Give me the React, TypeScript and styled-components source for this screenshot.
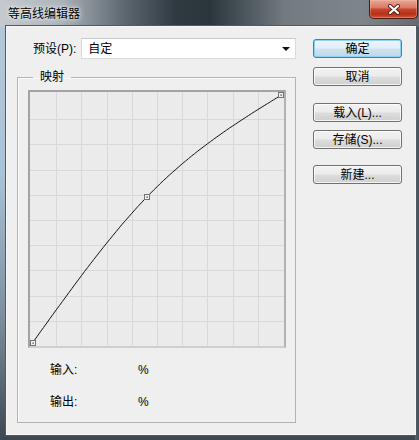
import React from "react";
import styled, { createGlobalStyle } from "styled-components";

const GlobalStyle = createGlobalStyle`
  html, body { margin: 0; padding: 0; background: #3a444c; }
  body {
    font-family: "Liberation Sans", "Noto Sans CJK SC", sans-serif;
    font-size: 12px;
    color: #000;
  }
`;

const UI_FONT = `"Liberation Sans", "Noto Sans CJK SC", sans-serif`;

/* window chrome */
const Window = styled.div`
  width: 419px;
  height: 440px;
  display: flex;
  flex-direction: column;
  overflow: hidden;
  background: linear-gradient(
    to right,
    #c4cacf 0%,
    #aeb5ba 14%,
    #5b666e 30%,
    #303a41 42%,
    #2c353c 50%,
    #4a545b 58%,
    #737a80 68%,
    #7f868b 86%,
    #646c73 100%
  );
`;

const TitleBar = styled.div`
  height: 27px;
  display: flex;
  justify-content: space-between;
  align-items: flex-start;
  padding-left: 8px;
`;

const TitleText = styled.div`
  font-family: ${UI_FONT};
  font-size: 12px;
  line-height: 16px;
  margin-top: 6px;
  text-shadow: 0 0 6px rgba(255, 255, 255, 0.9), 0 0 3px rgba(255, 255, 255, 0.8);
`;

const CloseButton = styled.div`
  width: 47px;
  height: 18px;
  margin-right: 1px;
  display: flex;
  align-items: center;
  justify-content: center;
  border: 1px solid #4e1a10;
  border-top: none;
  border-radius: 0 0 5px 5px;
  background: linear-gradient(#e9a797 0%, #dc7a66 42%, #c5452d 52%, #b52f16 78%, #d0553a 100%);
  box-shadow: inset 0 0 0 1px rgba(255, 200, 180, 0.35);
`;

const Frame = styled.div`
  flex: 1;
  display: flex;
  padding: 0 4px 6px 7px;
  background:
    linear-gradient(to left, #454f58 0, #5a646c 4px, transparent 4px),
    linear-gradient(to bottom, #b4c7d6 0%, #a9c3d8 35%, #7d8f9e 70%, #3d4750 100%);
`;

const Client = styled.div`
  flex: 1;
  display: flex;
  gap: 17px;
  padding: 11px 13px 0 10px;
  background: #efefef;
  box-shadow: 0 0 0 1px #f7f7f7, 0 0 0 2px #4d5963;
`;

/* left side */
const MainColumn = styled.div`
  width: 279px;
  display: flex;
  flex-direction: column;
`;

const PresetRow = styled.div`
  height: 21px;
  display: flex;
  align-items: center;
  padding-left: 16px;
  gap: 5px;
`;

const FieldLabel = styled.span`
  font-family: ${UI_FONT};
  font-size: 12px;
  line-height: 16px;
  white-space: nowrap;
`;

const ComboBox = styled.div`
  flex: 1;
  height: 21px;
  box-sizing: border-box;
  display: flex;
  align-items: center;
  justify-content: space-between;
  padding: 0 4px 0 6px;
  background: #fff;
  border: 1px solid #dadada;
  border-top-color: #c9c9c9;
  font-size: 12px;
  line-height: 16px;
`;

const Caret = styled.span`
  width: 0;
  height: 0;
  border-style: solid;
  border-width: 4px 4px 0 4px;
  border-color: #111 transparent transparent transparent;
  margin-right: 1px;
`;

const Group = styled.fieldset`
  margin: 10px 0 0 0;
  min-width: 0;
  padding: 5px 9px 12px 10px;
  border: 1px solid #b3b3b3;
  box-shadow: inset 1px 1px 0 #fafafa;
`;

const GroupLegend = styled.legend`
  margin-left: 5px;
  padding: 0 7px;
  font-family: ${UI_FONT};
  font-size: 12px;
  line-height: 16px;
`;

const CurveBox = styled.div`
  width: 258px;
  height: 258px;
  box-sizing: border-box;
  border: 2px solid #a3a3a3;
  border-right-color: #b2b2b2;
  border-bottom: 2px solid #cfcfcf;
  background: #ebebeb;
  svg { display: block; }
`;

const Readouts = styled.div`
  display: grid;
  grid-template-columns: 88px auto;
  row-gap: 16px;
  margin-top: 14px;
  padding-left: 22px;
  font-size: 12px;
  line-height: 16px;
`;

/* right side */
const ButtonColumn = styled.div`
  width: 89px;
  display: flex;
  flex-direction: column;
  padding-top: 1px;
`;

const DialogButton = styled.button<{ $primary?: boolean; $gap: number }>`
  height: 19px;
  width: 100%;
  margin-top: ${({ $gap }) => $gap}px;
  padding: 0;
  font-family: ${UI_FONT};
  font-size: 12px;
  line-height: 16px;
  color: #000;
  border-radius: 3px;
  border: 1px solid ${({ $primary }) => ($primary ? "#3c7fb1" : "#707070")};
  background: ${({ $primary }) =>
    $primary
      ? "linear-gradient(#edf6fb 0%, #e2eff7 48%, #cfe3ef 52%, #bdd7e7 100%)"
      : "linear-gradient(#f3f3f3 0%, #ebebeb 48%, #dddddd 52%, #cfcfcf 100%)"};
  box-shadow: inset 0 0 0 1px
    ${({ $primary }) => ($primary ? "#8fd3f2" : "rgba(255,255,255,0.75)")};
  cursor: default;
`;

/* contour: natural cubic spline through three normalised points */
const KNOTS: [number, number][] = [[0, 0], [0.46, 0.59], [1, 1]];
const toPx = (x: number, y: number): [number, number] => [1 + 252 * x, 253 - 251 * y];

function splineSamples(count: number) {
  const [[x0, y0], [x1, y1], [x2, y2]] = KNOTS;
  const h0 = x1 - x0;
  const h1 = x2 - x1;
  const m1 = (3 * ((y2 - y1) / h1 - (y1 - y0) / h0)) / (h0 + h1);
  const seg = (x: number) => {
    if (x <= x1) {
      return (m1 * (x - x0) ** 3) / (6 * h0) + (y0 / h0) * (x1 - x) + (y1 / h0 - (m1 * h0) / 6) * (x - x0);
    }
    return (m1 * (x2 - x) ** 3) / (6 * h1) + (y1 / h1 - (m1 * h1) / 6) * (x2 - x) + (y2 / h1) * (x - x1);
  };
  return Array.from({ length: count + 1 }, (_, i) => {
    const x = i / count;
    return toPx(x, seg(x));
  });
}

const CURVE = splineSamples(80);
const HANDLES = KNOTS.map(([x, y]) => toPx(x, y));
const GRID = Array.from({ length: 9 }, (_, i) => Math.round(1 + 25.2 * (i + 1)) + 0.5);
const GRID_Y = Array.from({ length: 9 }, (_, i) => Math.round(2 + 25.2 * (i + 1)) + 0.5);

function CurveChart() {
  return (
    <CurveBox>
      <svg width="254" height="254" viewBox="0 0 254 254">
        {GRID.map((x) => (
          <line key={"v" + x} x1={x} y1={0} x2={x} y2={254} stroke="#d8d8d8" strokeWidth="1" />
        ))}
        {GRID_Y.map((y) => (
          <line key={"h" + y} x1={0} y1={y} x2={254} y2={y} stroke="#d8d8d8" strokeWidth="1" />
        ))}
        <polyline
          points={CURVE.map(([x, y]) => `${x.toFixed(1)},${y.toFixed(1)}`).join(" ")}
          fill="none"
          stroke="#141414"
          strokeWidth="1"
        />
        {HANDLES.map(([x, y]) => {
          const cx = Math.min(Math.max(Math.round(x), 3), 251);
          const cy = Math.min(Math.max(Math.round(y), 3), 251);
          return (
            <g key={cx}>
              <rect x={cx - 2.5} y={cy - 2.5} width="5" height="5" fill="#f2f2f2" stroke="#707070" strokeWidth="1" />
              <rect x={cx - 0.5} y={cy - 0.5} width="1.2" height="1.2" fill="#222" />
            </g>
          );
        })}
      </svg>
    </CurveBox>
  );
}

export default function App() {
  return (
    <>
      <GlobalStyle />
      <Window>
        <TitleBar>
          <TitleText>等高线编辑器</TitleText>
          <CloseButton>
            <svg width="14" height="11" viewBox="0 0 14 11">
              <path d="M3 2 L11 9 M11 2 L3 9" stroke="#5a1e12" strokeWidth="4" strokeLinecap="round" />
              <path d="M3 2 L11 9 M11 2 L3 9" stroke="#ffffff" strokeWidth="2.2" strokeLinecap="round" />
            </svg>
          </CloseButton>
        </TitleBar>
        <Frame>
          <Client>
            <MainColumn>
              <PresetRow>
                <FieldLabel>预设(P):</FieldLabel>
                <ComboBox>
                  <span>自定</span>
                  <Caret />
                </ComboBox>
              </PresetRow>
              <Group>
                <GroupLegend>映射</GroupLegend>
                <CurveChart />
                <Readouts>
                  <span>输入:</span>
                  <span>%</span>
                  <span>输出:</span>
                  <span>%</span>
                </Readouts>
              </Group>
            </MainColumn>
            <ButtonColumn>
              <DialogButton $primary $gap={0}>确定</DialogButton>
              <DialogButton $gap={9}>取消</DialogButton>
              <DialogButton $gap={17}>载入(L)...</DialogButton>
              <DialogButton $gap={8}>存储(S)...</DialogButton>
              <DialogButton $gap={16}>新建...</DialogButton>
            </ButtonColumn>
          </Client>
        </Frame>
      </Window>
    </>
  );
}
